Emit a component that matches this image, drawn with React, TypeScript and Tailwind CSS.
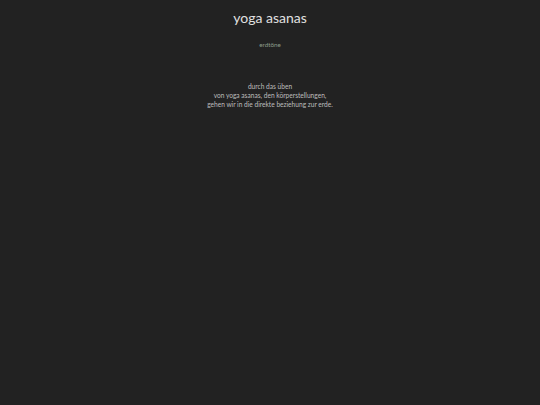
export default function App() {
  return (
    <div className="min-h-[405px] w-full bg-[#222222] flex flex-col items-center font-['Lato',sans-serif]">
      <h1 className="mt-[9px] text-[14px] leading-[18px] text-[#e0e0e0] font-normal">yoga asanas</h1>
      <p className="mt-[14px] text-[6.3px] leading-[8px] text-[#8c9c8a]">erdtöne</p>
      <div className="mt-[33px] flex flex-col items-center text-[6.6px] leading-[9px] text-[#bdbdbd]">
        <p>durch das üben</p>
        <p>von yoga asanas, den körperstellungen,</p>
        <p>gehen wir in die direkte beziehung zur erde.</p>
      </div>
    </div>
  )
}
